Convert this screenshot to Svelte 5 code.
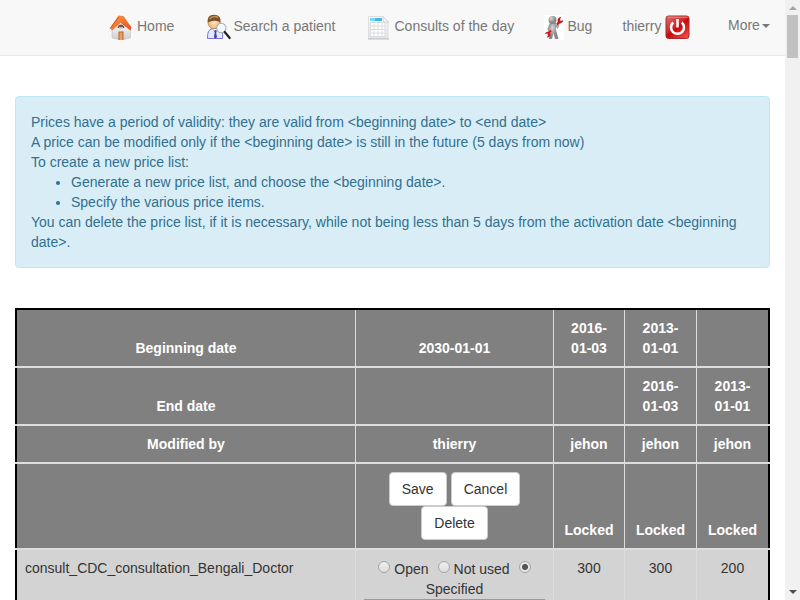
<script>
  const heads = [
    { h: 56, cells: ['Beginning date', '2030-01-01', '2016-\n01-03', '2013-\n01-01', ''] },
    { h: 56, cells: ['End date', '', '', '2016-\n01-03', '2013-\n01-01'] },
    { h: 36, cells: ['Modified by', 'thierry', 'jehon', 'jehon', 'jehon'] }
  ];
</script>

<div class="screen">
  <div class="page">
    <nav>
      <a class="home">
        <svg width="24" height="26" viewBox="0 0 24 26">
          <defs>
            <linearGradient id="roof" x1="0" y1="0" x2="1" y2="1"><stop offset="0" stop-color="#f9a25d"/><stop offset=".5" stop-color="#f4762c"/><stop offset="1" stop-color="#e0501c"/></linearGradient>
            <linearGradient id="wall" x1="0" y1="0" x2="0" y2="1"><stop offset="0" stop-color="#fff"/><stop offset="1" stop-color="#cdcfcd"/></linearGradient>
          </defs>
          <path d="M3 15 12 6l9.500 8v9q-9 3-18.500 0z" fill="url(#wall)" stroke="#c4c4c4" stroke-width=".6"/>
          <path d="M9.500.5 14.500 1 22.500 12.500 21.500 15 12 7.500 3 15.500 1 13z" fill="url(#roof)"/>
          <path d="M1.200 13.500 10 1.500M12 7.500l9.500 7.500" fill="none" stroke="#e34d1b" stroke-width="1"/>
          <path d="M8.500 13q.5-3.500 3.500-3.500t3.500 3.500z" fill="#75534a"/><path d="M10 12h4v1.500h-4z" fill="#d8b49a"/>
          <path d="M9.500 16.500h5V25h-5z" fill="#b5642c"/><path d="M10.500 17.500h3V25h-3z" fill="#ee9f5a"/>
        </svg>
        <span>Home</span>
      </a>
      <a class="search">
        <svg width="26" height="26" viewBox="0 0 26 26">
          <defs><radialGradient id="face"><stop offset="0" stop-color="#ffe8c4"/><stop offset="1" stop-color="#e8b47c"/></radialGradient></defs>
          <path d="M1.500 24.500q-.5-9 5-10h7q4 2 3 10z" fill="#e3e8ff" stroke="#7776cd"/>
          <path d="m6.500 15 2.500 3 3-3" fill="#fff" stroke="#9b99dc" stroke-width=".7"/>
          <path d="m8.200 16.500 1.200-.5 1.300 1-.5 2 .8 4-1.500 2-1.600-2 .8-4z" fill="#4144a4"/>
          <ellipse cx="8" cy="8.500" rx="6" ry="6.400" fill="url(#face)" stroke="#b47b42" stroke-width=".7"/>
          <path d="M1.700 8.500Q.7 1 8 .7q7.500 0 6.500 8Q12 6.500 8.500 6.800 5 7 1.700 8.500z" fill="#7d5128"/>
          <path d="M3.500 5q4-4 8.500-1.500" fill="none" stroke="#c29258" stroke-width="1.600"/>
          <circle cx="15.300" cy="14" r="4.700" fill="#f4f9fc" fill-opacity=".96" stroke="#a9aeb2" stroke-width="1.100"/>
          <path d="m18.700 18 5 6" stroke="#222" stroke-width="2.200" stroke-linecap="round"/>
        </svg>
        <span>Search a patient</span>
      </a>
      <a class="consults">
        <svg width="24" height="26" viewBox="0 0 24 26">
          <defs><linearGradient id="sheet" x1="0" y1="0" x2="0" y2="1"><stop offset="0" stop-color="#fafafa"/><stop offset="1" stop-color="#e3e3e3"/></linearGradient></defs>
          <path d="M1.500 1.500H16l5 5v17h-19.500z" fill="url(#sheet)" stroke="#dedede"/>
          <path d="M1 24h21" stroke="#bdbdbd"/>
          <path d="M3 7h15v15H3z" fill="#fff"/>
          <path d="M3 7.500h15m-15 3.500h15m-15 3.500h15m-15 3.500h15m-15 3.500h15M3.500 7v15m3.500-15v15m4-15v15m4-15v15m3-15v15" stroke="#d5dcdf" stroke-width=".9"/>
          <path d="M3 3h12v3H3z" fill="#43b8ee"/><path d="M3 3h5v3H3z" fill="#7ad8f8"/>
          <path d="m16 1.500 5.500 6-5-.8z" fill="#fff" stroke="#c6c6c6" stroke-width=".7"/>
        </svg>
        <span>Consults of the day</span>
      </a>
      <a class="bug">
        <svg width="20" height="25" viewBox="0 0 20 25">
          <defs><radialGradient id="gray" cx=".35" cy=".3"><stop offset="0" stop-color="#d8d8d8"/><stop offset="1" stop-color="#888"/></radialGradient></defs>
          <path d="M0 0h20v25H0z" fill="#fff"/>
          <path d="M6 8h6v7l2.500 9H11l-1.500-6L8 24H5l1-9z" fill="url(#gray)"/>
          <path d="m6.500 9-2 5 2 4m5-8 2 2 1.500-5" fill="none" stroke="#a0a0a0" stroke-width="2.200" stroke-linecap="round"/>
          <circle cx="8.500" cy="5" r="4" fill="url(#gray)"/>
          <path d="m12.800 9.500 3-3M5 17.500l2-2" stroke="#d11b1b" stroke-width="2"/>
          <path d="M19.500 5.200 16.500 6 16 4l1.500-2q-4 0-4 4 .5 3 3 2.500 2.500-.5 3-3.300zM.8 19 3.500 18.500 4 20.500 2.500 22.500q4 0 4-3.500-.5-2.500-3-2.300-2.200.2-2.700 2.300z" fill="#cf1920"/>
        </svg>
        <span>Bug</span>
      </a>
      <a class="user">
        <span>thierry</span>
        <svg width="25" height="25" viewBox="0 0 25 25">
          <defs><linearGradient id="power" x1="0" y1="0" x2=".8" y2="1"><stop offset="0" stop-color="#d8706f"/><stop offset=".5" stop-color="#cf2425"/><stop offset=".55" stop-color="#c80505"/><stop offset="1" stop-color="#f04a42"/></linearGradient></defs>
          <rect x="1" y="1" width="23" height="22.500" rx="2.500" fill="url(#power)" stroke="#a82a2a"/>
          <path d="M2.500 2.200h20" stroke="#eaa3a1" stroke-width=".8"/>
          <path d="M8.200 7.500a6.500 6.500 0 1 0 8.600 0M12.500 4v8.500" fill="none" stroke="#fff" stroke-width="2.500"/>
        </svg>
      </a>
      <a class="more">More<i></i></a>
    </nav>

    <section class="alert">
      Prices have a period of validity: they are valid from &lt;beginning date&gt; to &lt;end date&gt;<br>
      A price can be modified only if the &lt;beginning date&gt; is still in the future (5 days from now)<br>
      To create a new price list:
      <ul>
        <li>Generate a new price list, and choose the &lt;beginning date&gt;.</li>
        <li>Specify the various price items.</li>
      </ul>
      You can delete the price list, if it is necessary, while not being less than 5 days from the activation date &lt;beginning date&gt;.
    </section>

    <div class="table">
      {#each heads as row}
        <div class="row head" style:height="{row.h}px">
          {#each row.cells as cell}<div class="cell">{cell}</div>{/each}
        </div>
      {/each}
      <div class="row head actions">
        <div class="cell"></div>
        <div class="cell buttons">
          <div><button>Save</button><button>Cancel</button></div>
          <button>Delete</button>
        </div>
        {#each [1, 2, 3] as _}<div class="cell">Locked</div>{/each}
      </div>
      <div class="row body">
        <div class="cell name">consult_CDC_consultation_Bengali_Doctor</div>
        <div class="cell status">
          <div class="choices"><b class="radio"></b><span class="open">Open</span><b class="radio"></b><span class="unused">Not used</span><b class="radio checked"></b></div>
          <div>Specified</div>
          <div class="field"></div>
        </div>
        {#each [300, 300, 200] as price}<div class="cell">{price}</div>{/each}
      </div>
    </div>
  </div>

  <aside>
    <i class="up"></i>
    <div class="thumb"></div>
    <i class="down"></i>
  </aside>
</div>

<style>
  .screen { display: flex; width: 800px; height: 600px; overflow: hidden; background: #fff; color: #333; font: 14px/20px "Liberation Sans", Arial, sans-serif; }
  .page { width: 785px; flex: none; }
  nav { display: flex; box-sizing: border-box; height: 56px; background: #f8f8f8; border-bottom: 1px solid #e7e7e7; color: #777; padding-left: 109px; }
  nav a { display: flex; flex: none; box-sizing: border-box; height: 55px; white-space: nowrap; }
  nav span { margin-top: 16px; }
  nav svg { flex: none; margin-top: 15px; }
  .home { width: 97px; gap: 4px; }
  .search { width: 160.500px; gap: 1.500px; }
  .search svg { margin-top: 14px; }
  .consults { width: 177.500px; gap: 4px; }
  .bug { width: 78.500px; gap: 3.500px; }
  .user { width: 105.500px; gap: 4px; }
  .more { padding-top: 15px; }
  .more i { width: 0; height: 0; margin: 9px 0 0 2px; border: 4px solid transparent; border-top-color: #777; border-bottom: 0; }
  .alert { box-sizing: border-box; width: 755px; height: 172px; margin: 40px 15px; padding: 15px; background: #d9edf7; border: 1px solid #bce8f1; border-radius: 4px; color: #31708f; }
  ul { margin: 0; padding-left: 40px; }
  .table { display: flex; flex-direction: column; gap: 2px; width: 755px; margin-left: 15px; background: #ddd; border-top: 2px solid #000; }
  .row { display: grid; grid-template-columns: 339px 198px 71px 72px 71px; box-sizing: border-box; border: solid #000; border-width: 0 2px; }
  .cell { box-sizing: border-box; padding: 8px; border-right: 1px solid #ddd; text-align: center; }
  .cell:last-child { border-right: 0; }
  .head { background: #808080; color: #fff; font-weight: bold; }
  .head .cell { display: flex; align-items: flex-end; justify-content: center; white-space: pre-line; }
  .actions { height: 84px; }
  .head .buttons { flex-direction: column; align-items: center; justify-content: flex-start; }
  .buttons div { display: flex; gap: 4px; }
  button { box-sizing: border-box; height: 34px; margin: 0; padding: 6px 12px; border: 1px solid #ccc; border-radius: 4px; background: #fff; color: #333; font: 14px/20px "Liberation Sans", Arial, sans-serif; }
  .body { height: 60px; background: #d3d3d3; }
  .body .name { text-align: left; }
  .choices { display: flex; justify-content: center; height: 21px; }
  .choices span { padding-top: 1px; }
  .choices .open { margin: 0 9px 0 4px; }
  .choices .unused { margin: 0 9px 0 4px; }
  .radio { box-sizing: border-box; width: 12px; height: 12px; margin-top: 3px; border: 1px solid #a5a5a5; border-radius: 50%; background: linear-gradient(#ededed, #dedede); }
  .checked { background: radial-gradient(circle, #555 0 2.700px, #e6e6e6 3.300px); }
  .status div:nth-child(2) { height: 20px; }
  .field { height: 34px; border-top: 1px solid #999; background: #b9b9b9; }
  aside { display: flex; flex-direction: column; align-items: center; box-sizing: border-box; width: 15px; height: 600px; padding: 6px 0; background: #f1f1f1; }
  aside i { width: 0; height: 0; border: 4px solid transparent; }
  .up { border-top: 0; border-bottom-color: #a3a3a3; }
  .down { margin-top: auto; border-bottom: 0; border-top-color: #505050; }
  .thumb { width: 11px; height: 43px; margin-top: 5px; background: #c1c1c1; }
</style>
